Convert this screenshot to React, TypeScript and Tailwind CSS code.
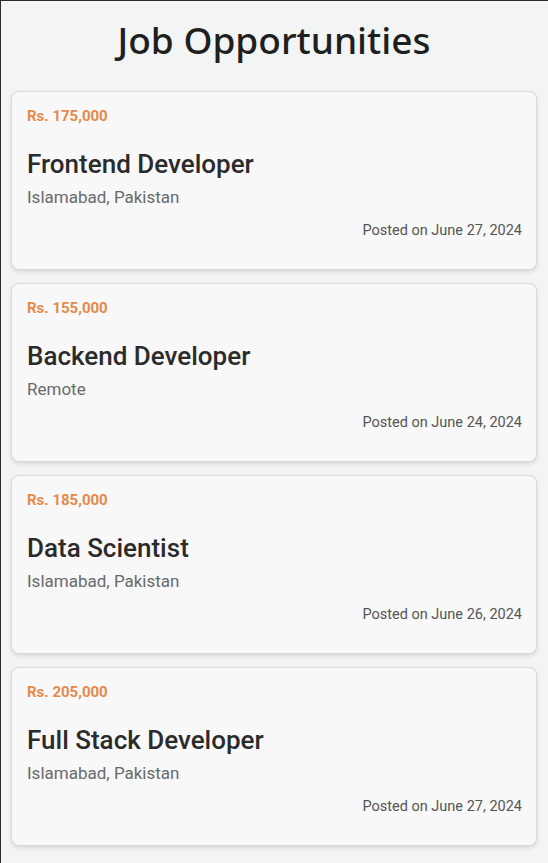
import React from "react";

interface Job {
  salary: string;
  title: string;
  location: string;
  posted: string;
}

const jobs: Job[] = [
  { salary: "Rs. 175,000", title: "Frontend Developer", location: "Islamabad, Pakistan", posted: "June 27, 2024" },
  { salary: "Rs. 155,000", title: "Backend Developer", location: "Remote", posted: "June 24, 2024" },
  { salary: "Rs. 185,000", title: "Data Scientist", location: "Islamabad, Pakistan", posted: "June 26, 2024" },
  { salary: "Rs. 205,000", title: "Full Stack Developer", location: "Islamabad, Pakistan", posted: "June 27, 2024" },
];

function JobCard({ job }: { job: Job }) {
  return (
    <div className="rounded-lg border border-[#d9d9d9] bg-[#f8f8f8] shadow-[0_2px_4px_rgba(0,0,0,0.12)] pl-[15px] pr-[14px] pt-[14px] pb-[28px]">
      <p className="text-[15px] leading-5 font-bold text-[#e48a4c]">{job.salary}</p>
      <h2 className="mt-[22px] text-[26px] leading-8 font-medium text-[#2b2b2b]">{job.title}</h2>
      <p className="mt-[5px] text-[17px] leading-6 text-[#6a6a6a]">{job.location}</p>
      <p className="mt-[12px] text-right text-[14.5px] leading-5 text-[#555555]">Posted on {job.posted}</p>
    </div>
  );
}

export default function App() {
  return (
    <div
      className="min-h-[863px] bg-[#f3f4f4] border-l border-t border-[#2a2a2a] pl-[10px] pr-[11px] pb-4"
      style={{ fontFamily: "Roboto, 'Liberation Sans', sans-serif" }}
    >
      <h1
        className="pt-[17px] pb-[29px] text-center text-[37px] leading-[44px] font-medium text-[#1f1f1f]"
        style={{ fontFamily: "'Noto Sans', 'DejaVu Sans', sans-serif" }}
      >
        Job Opportunities
      </h1>
      <div className="flex flex-col gap-[13px]">
        {jobs.map((job) => (
          <JobCard key={job.title} job={job} />
        ))}
      </div>
    </div>
  );
}
